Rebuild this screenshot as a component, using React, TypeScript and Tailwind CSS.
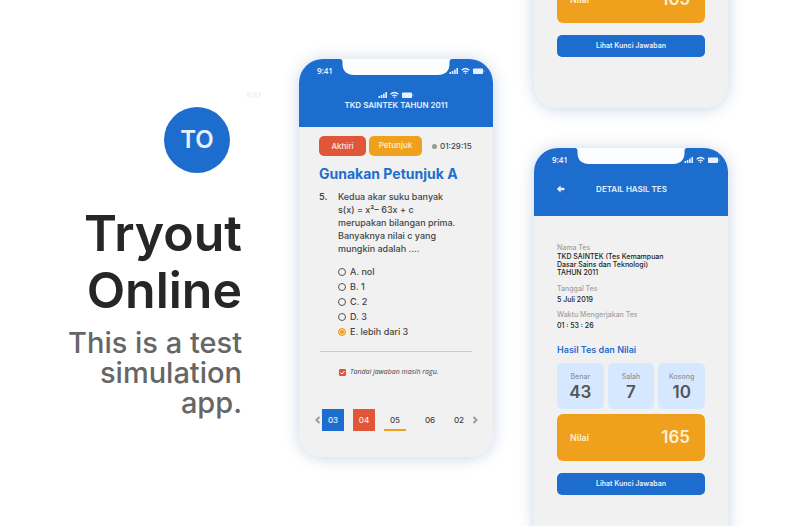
import type { ReactNode } from "react";

function StatusIcons({ className = "" }: { className?: string }) {
  return (
    <svg viewBox="0 0 36 8" className={`h-2 w-9 ${className}`} fill="#e6f1ff" aria-hidden="true">
      <rect x="0.500" y="5" width="1.6" height="2" />
      <rect x="2.800" y="4" width="1.6" height="3" />
      <rect x="5.100" y="2.600" width="1.6" height="4.400" />
      <rect x="7.400" y="1" width="1.6" height="6" />
      <g fill="none" stroke="#e6f1ff" strokeWidth="1.200">
        <path d="M12.600 3.300Q16.500 -.300 20.400 3.300" />
        <path d="M14.300 5Q16.500 3.100 18.700 5" />
      </g>
      <path d="M15.300 5.900Q16.500 5 17.700 5.900L16.500 7.200Z" />
      <rect x="24" y="1.500" width="10" height="5.500" rx="0.800" />
      <rect x="34.600" y="3.200" width="0.800" height="2" opacity="0.600" />
    </svg>
  );
}

function Phone({ header, children }: { header: ReactNode; children: ReactNode }) {
  return (
    <div className="shrink-0 rounded-[24px] shadow-[0_1px_16px_rgba(30,80,150,0.24)]">
      <section className="relative flex h-[398px] w-[194px] flex-col overflow-hidden rounded-[24px] bg-[#f1f1f1]">
        <header className="flex h-[68px] shrink-0 flex-col bg-[#1d6dce] text-[#e6f1ff]">
          <svg viewBox="0 0 194 16" className="absolute top-0 left-0 h-4 w-full" aria-hidden="true">
            <path
              d="M41 0Q43.500 0 43.500 3V5C43.500 12 48 16 55 16H139C146 16 150.500 12 150.500 5V3Q150.500 0 153 0Z"
              fill="#fcfdfe"
            />
          </svg>
          <div className="flex h-6 shrink-0 items-center justify-between pr-2 pl-[18px]">
            <span className="font-['Noto_Sans',sans-serif] text-[8px] font-semibold">9:41</span>
            <StatusIcons />
          </div>
          {header}
        </header>
        {children}
      </section>
    </div>
  );
}

const options = ["A. nol", "B. 1", "C. 2", "D. 3", "E. lebih dari 3"];

function QuestionScreen() {
  return (
    <Phone
      header={
        <div className="flex flex-col items-center pt-2">
          <StatusIcons />
          <h2 className="text-[8px] leading-3 font-semibold">TKD SAINTEK TAHUN 2011</h2>
        </div>
      }
    >
      <div className="flex flex-col px-5 pt-[9px] text-[#444]">
        <div className="flex items-center gap-[3px] text-[8px] font-medium">
          <button className="h-5 w-[47px] rounded-[5px] bg-[#e15638] text-[#fbe9e4]">Akhiri</button>
          <button className="h-5 w-[53px] rounded-[5px] bg-[#efa01c] pb-[2px] text-[#fdf0d8]">Petunjuk</button>
          <span className="ml-[7px] size-[5px] rounded-full bg-[#999]" />
          <time>01:29:15</time>
        </div>
        <h3 className="mt-[9px] text-[14px] leading-[18px] font-bold whitespace-nowrap text-[#1d6dce]">
          Gunakan Petunjuk A
        </h3>
        <div className="mt-[7px] flex text-[9px] leading-[13px] font-medium">
          <span className="w-[19px] shrink-0 font-semibold">5.</span>
          <p className="whitespace-nowrap">
            Kedua akar suku banyak<br />
            s(x) = x²– 63x + c<br />
            merupakan bilangan prima.<br />
            Banyaknya nilai c yang<br />
            mungkin adalah ....
          </p>
        </div>
        <div className="mt-[9px] flex flex-col pl-[19px] text-[9px] leading-[15px] font-medium">
          {options.map((option, i) => (
            <label key={option} className="flex items-center gap-1">
              <input
                type="radio"
                name="answer"
                defaultChecked={i === 4}
                className="size-2 appearance-none rounded-full border border-[#555] checked:border-[#efa01c] checked:bg-[#efa01c] checked:shadow-[inset_0_0_0_1px_#f8dca6]"
              />
              {option}
            </label>
          ))}
        </div>
        <hr className="mx-[1px] mt-3 border-[#ccc]" />
        <label className="mt-[14px] flex items-center gap-1 pl-5 font-['Open_Sans',sans-serif] text-[7px] leading-3 italic">
          <span className="relative flex size-[7px]">
            <input type="checkbox" defaultChecked className="size-[7px] appearance-none rounded-[1px] bg-[#e15638]" />
            <svg viewBox="0 0 7 7" className="pointer-events-none absolute inset-0" fill="none" stroke="#fff" aria-hidden="true">
              <path d="M1.500 3.500L3 5L5.500 2" />
            </svg>
          </span>
          Tandai jawaban masih ragu.
        </label>
      </div>
      <nav className="mt-[31px] flex items-center pl-4 text-[8px] font-medium text-[#444]" aria-label="Soal">
        <button aria-label="Sebelumnya" className="mr-[2px]">
          <svg viewBox="0 0 5 8" className="h-2 w-[5px]" fill="none" stroke="#999" strokeWidth="1.800">
            <path d="M4.400 1L1.400 4L4.400 7" />
          </svg>
        </button>
        <button className="mr-[9px] h-[22px] w-[22px] bg-[#1d6dce] text-[#e6f1ff]">03</button>
        <button className="mr-[9px] h-[22px] w-[22px] bg-[#e15638] text-[#fbe9e4]">04</button>
        <button className="h-[22px] w-[22px] border-y-2 border-t-transparent border-b-[#efa01c]">05</button>
        <button className="ml-[13px] h-[22px] w-[22px]">06</button>
        <button className="ml-[7px] h-[22px] w-[22px]">02</button>
        <button aria-label="Berikutnya" className="ml-[3px]">
          <svg viewBox="0 0 5 8" className="h-2 w-[5px]" fill="none" stroke="#999" strokeWidth="1.800">
            <path d="M0.600 1L3.600 4L0.600 7" />
          </svg>
        </button>
      </nav>
    </Phone>
  );
}

const scores = [
  { label: "Benar", value: 43 },
  { label: "Salah", value: 7 },
  { label: "Kosong", value: 10 },
];

function ResultScreen() {
  return (
    <Phone
      header={
        <div className="flex items-center pt-[11px] pl-[22px]">
          <button aria-label="Kembali" className="w-[9px]">
            <svg viewBox="0 0 9 8" className="h-2 w-[9px]" fill="#e6f1ff">
              <path d="M.800 4L4.600 .500V2.700H8.400V5.300H4.600V7.500Z" />
            </svg>
          </button>
          <h2 className="flex-1 pr-[30px] text-center text-[8px] leading-3 font-semibold">DETAIL HASIL TES</h2>
        </div>
      }
    >
      <div className="flex flex-col px-[23px] pt-[26px]">
        <dl className="text-[7px] leading-[11px] font-medium">
          <div>
            <dt className="text-[#a2a2a2]">Nama Tes</dt>
            <dd className="leading-[8px] whitespace-nowrap text-[#222]">
              TKD SAINTEK (Tes Kemampuan<br />Dasar Sains dan Teknologi)<br />TAHUN 2011
            </dd>
          </div>
          <div className="mt-[6px]">
            <dt className="text-[#a2a2a2]">Tanggal Tes</dt>
            <dd className="text-[#222]">5 Juli 2019</dd>
          </div>
          <div className="mt-1">
            <dt className="text-[#a2a2a2]">Waktu Mengerjakan Tes</dt>
            <dd className="text-[#222]">01 : 53 : 26</dd>
          </div>
        </dl>
        <h3 className="mt-3 text-[9px] leading-[14px] font-semibold text-[#1d6dce]">Hasil Tes dan Nilai</h3>
        <div className="mt-[6px] grid grid-cols-3 gap-1">
          {scores.map((score) => (
            <div key={score.label} className="flex h-[46px] flex-col items-center rounded-[5px] bg-[#d6e8ff] pt-[9px]">
              <span className="text-[7px] leading-[10px] font-medium text-[#8d949c]">{score.label}</span>
              <span className="text-[17px] leading-5 font-semibold text-[#555]">{score.value}</span>
            </div>
          ))}
        </div>
        <div className="mt-[5px] flex h-[47px] items-center justify-between rounded-[6px] bg-[#efa01c] pr-[15px] pl-[13px] text-[#fdf0d8]">
          <span className="text-[9px] font-semibold">Nilai</span>
          <span className="text-[17px] font-semibold">165</span>
        </div>
        <button className="mt-3 h-[22px] rounded-[5px] bg-[#1d6dce] text-[7px] font-semibold text-[#e6f1ff]">
          Lihat Kunci Jawaban
        </button>
      </div>
    </Phone>
  );
}

export default function App() {
  return (
    <main className="flex h-screen justify-end overflow-hidden bg-white pr-[72px] font-['Inter',sans-serif]">
      <div className="flex flex-col items-end pt-[107px] text-right">
        <div className="mr-3 flex size-[66px] items-center justify-center rounded-full bg-[#1d6dce] text-[24px] font-semibold text-[#e6f1ff]">
          TO
        </div>
        <h1 className="mt-8 text-[50px] leading-[57px] font-semibold text-[#262626]">
          Tryout<br />Online
        </h1>
        <p className="mt-[9px] text-[29px] leading-[30px] font-medium whitespace-nowrap text-[#666]">
          This is a test<br />simulation<br />app.
        </p>
      </div>
      <div className="w-[57px] shrink-0 pt-[89px] pl-1">
        <span className="block font-['Noto_Sans',sans-serif] text-[8px] leading-3 font-semibold text-[#e6f1ff]">9:41</span>
      </div>
      <div className="flex shrink-0 items-start gap-[41px]">
        <div className="pt-[59px]">
          <QuestionScreen />
        </div>
        <div className="-mt-[290px] flex flex-col gap-10">
          <ResultScreen />
          <ResultScreen />
        </div>
      </div>
    </main>
  );
}
